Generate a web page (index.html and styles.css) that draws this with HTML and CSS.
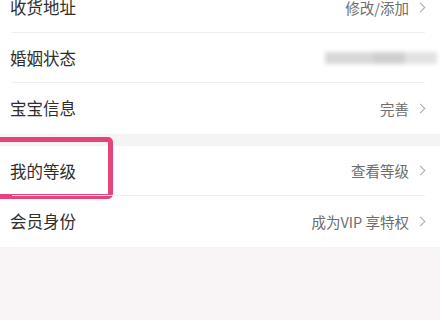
FILE: index.html
```html
<!DOCTYPE html>
<html lang="zh-CN">
<head>
    <meta charset="UTF-8">
    <meta name="viewport" content="width=device-width, initial-scale=1.0">
    <title>个人资料</title>
    <link rel="stylesheet" href="styles.css">
</head>
<body>
    <div class="page">
        <div class="group first">
            <div class="item">
                <div class="label">收货地址</div>
                <div class="value">修改/添加<span class="arrow"></span></div>
            </div>
            <div class="item">
                <div class="label">婚姻状态</div>
                <div class="value">
                    <div class="blurred">
                        <span class="blk b1"></span>
                        <span class="blk b2"></span>
                        <span class="blk b3"></span>
                    </div>
                </div>
            </div>
            <div class="item last">
                <div class="label">宝宝信息</div>
                <div class="value">完善<span class="arrow"></span></div>
            </div>
        </div>

        <div class="gap"></div>

        <div class="group">
            <div class="item marked">
                <div class="label">我的等级</div>
                <div class="value">查看等级<span class="arrow"></span></div>
                <div class="highlight"></div>
            </div>
            <div class="item last">
                <div class="label">会员身份</div>
                <div class="value">成为VIP 享特权<span class="arrow"></span></div>
            </div>
        </div>
    </div>
</body>
</html>
```

FILE: styles.css
```css
* {
    margin: 0;
    padding: 0;
    box-sizing: border-box;
}

body {
    font-family: "Noto Sans CJK SC", "Noto Sans", sans-serif;
    background: #f9f4f5;
    width: 440px;
    height: 320px;
    overflow: hidden;
}

.page {
    display: flex;
    flex-direction: column;
}

.group {
    background: white;
}

.group.first {
    margin-top: -18px;
}

.gap {
    height: 12px;
    background: #f4f4f4;
}

.item {
    height: 50.5px;
    display: flex;
    align-items: center;
    justify-content: space-between;
    padding: 0 10px 0 10px;
    position: relative;
}

.item::after {
    content: "";
    position: absolute;
    left: 12px;
    right: 15px;
    bottom: 0;
    height: 1px;
    background: #efefef;
}

.item.last::after {
    display: none;
}

.label {
    font-size: 16.5px;
    color: #2e2e2e;
}

.value {
    display: flex;
    align-items: center;
    font-size: 14.5px;
    color: #6e6e6e;
}

.arrow {
    display: inline-block;
    width: 7px;
    height: 7px;
    border-top: 1.3px solid #aaa;
    border-right: 1.3px solid #aaa;
    transform: rotate(45deg);
    margin-left: 8px;
    margin-right: 6px;
}

.blurred {
    display: flex;
    width: 112px;
    height: 12px;
    margin-right: -7px;
    filter: blur(2px);
}

.blk {
    display: block;
    height: 100%;
}

.b1 {
    width: 48px;
    background: #d8d8d8;
}

.b2 {
    width: 32px;
    background: #cfcfcf;
}

.b3 {
    width: 32px;
    background: #e2e2e2;
}

.highlight {
    position: absolute;
    left: -6px;
    top: -9px;
    width: 119px;
    height: 62px;
    border: 5.5px solid #e6437b;
    border-radius: 5px;
}
```
